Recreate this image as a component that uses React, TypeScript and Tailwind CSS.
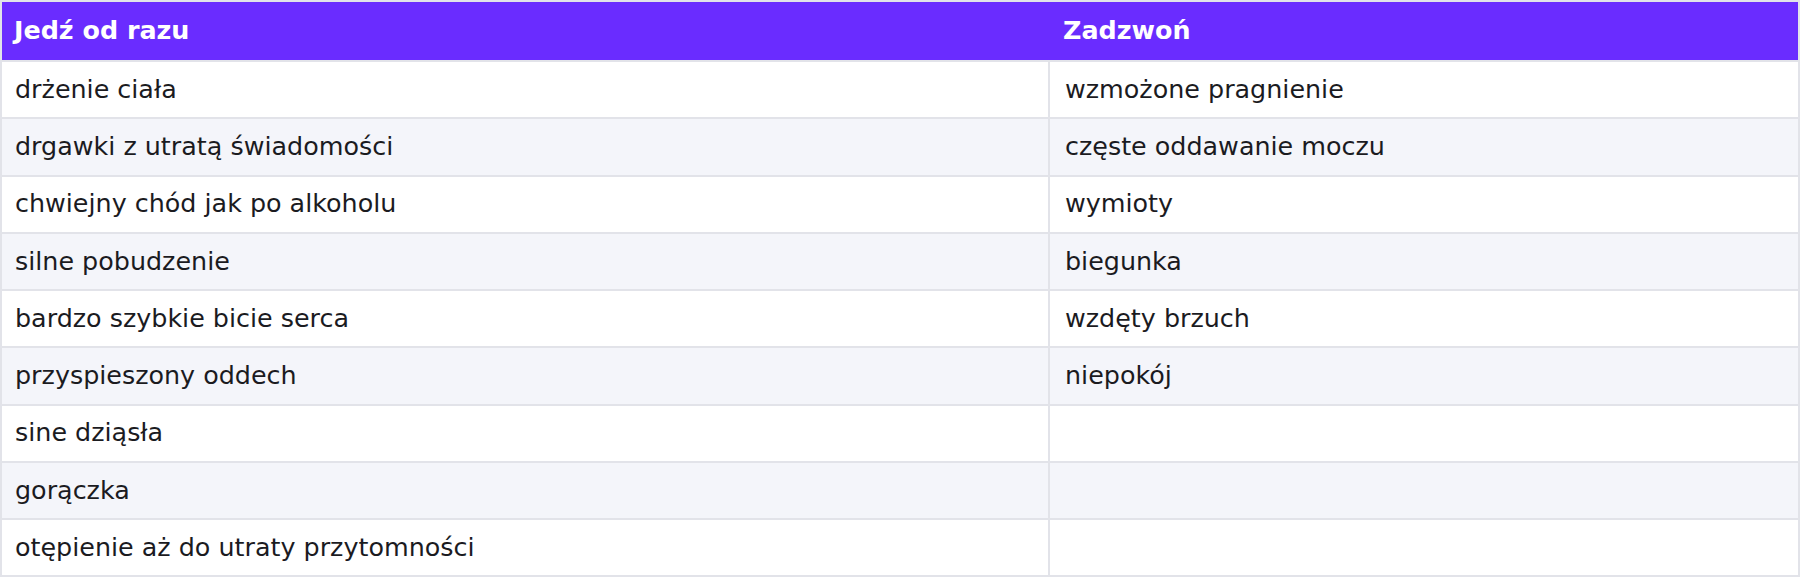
import React from 'react';

const rows: [string, string][] = [
  ['drżenie ciała', 'wzmożone pragnienie'],
  ['drgawki z utratą świadomości', 'częste oddawanie moczu'],
  ['chwiejny chód jak po alkoholu', 'wymioty'],
  ['silne pobudzenie', 'biegunka'],
  ['bardzo szybkie bicie serca', 'wzdęty brzuch'],
  ['przyspieszony oddech', 'niepokój'],
  ['sine dziąsła', ''],
  ['gorączka', ''],
  ['otępienie aż do utraty przytomności', ''],
];

export default function App() {
  return (
    <div className="w-[1800px] bg-white font-['DejaVu_Sans',sans-serif] text-[25.4px] leading-[1.164] text-[#1b1b1f]">
      {/* Symptoms table */}
      <div className="border-2 border-[#e2e3e9]">
        <div className="grid grid-cols-[1046px_1fr] h-[58px] bg-[#6a2cff] font-bold text-white">
          <div className="flex items-center px-[12px]">Jedź od razu</div>
          <div className="flex items-center pl-[15px] pr-[12px]">Zadzwoń</div>
        </div>
        {rows.map(([left, right], i) => (
          <div
            key={i}
            className={`grid grid-cols-[1046px_1fr] h-[57.25px] border-t-2 border-[#e2e3e9] ${
              i % 2 === 1 ? 'bg-[#f4f5fa]' : 'bg-white'
            }`}
          >
            <div className="flex items-center px-[13px]">{left}</div>
            <div className="flex items-center border-l-2 border-[#e2e3e9] pl-[15px] pr-[12px]">{right}</div>
          </div>
        ))}
      </div>
    </div>
  );
}
